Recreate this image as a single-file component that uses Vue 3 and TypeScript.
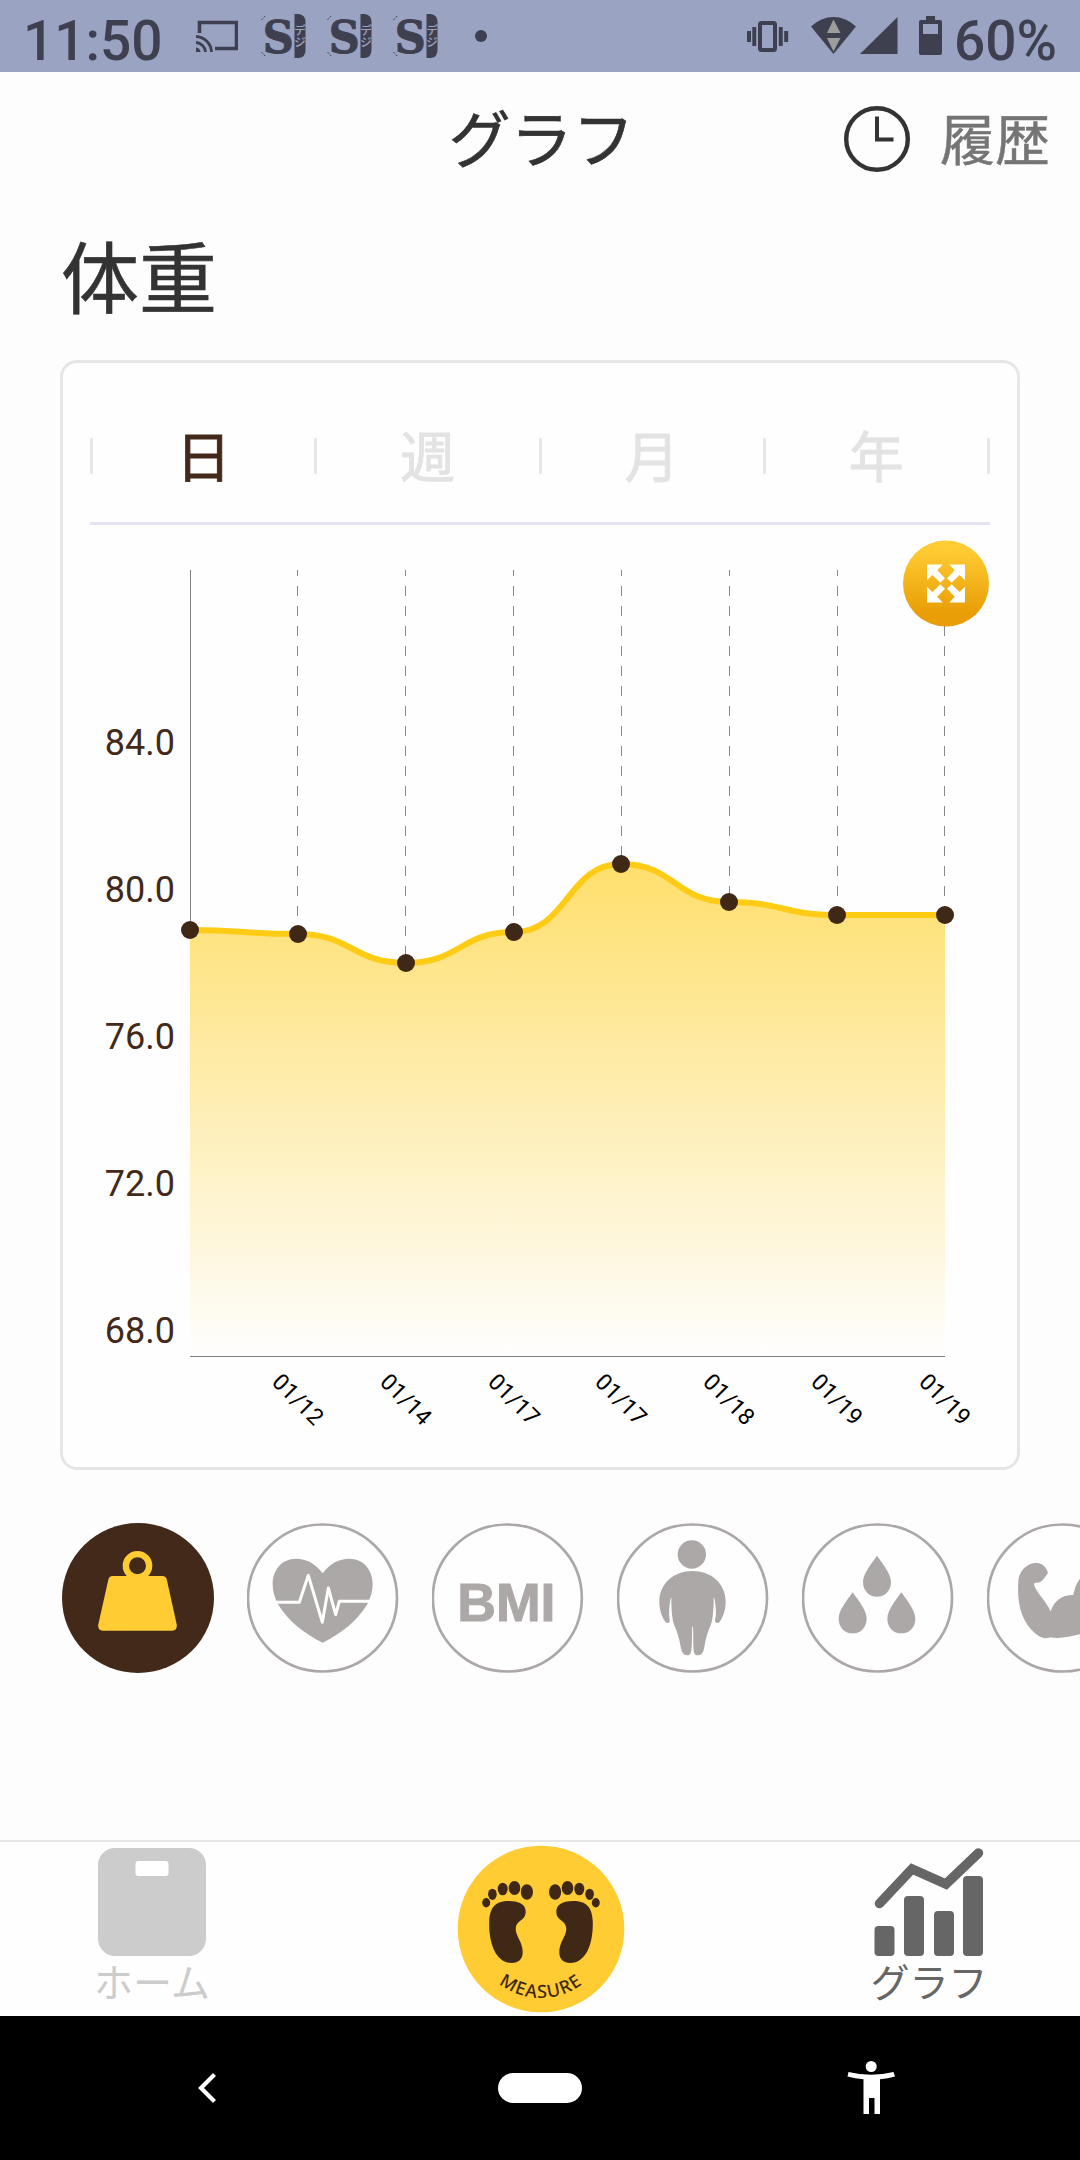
<script setup lang="ts">
interface Point {
  x: number
  y: number
  label?: string
}

const notifications = [0, 1, 2]
const tabs = ['日', '週', '月', '年']

const points: Point[] = [
  { x: 190, y: 930 },
  { x: 298, y: 934, label: '01/12' },
  { x: 406, y: 963, label: '01/14' },
  { x: 514, y: 932, label: '01/17' },
  { x: 621, y: 864, label: '01/17' },
  { x: 729, y: 902, label: '01/18' },
  { x: 837, y: 915, label: '01/19' },
  { x: 945, y: 915, label: '01/19' },
]

const yLabels = [
  { text: '84.0', y: 755 },
  { text: '80.0', y: 902 },
  { text: '76.0', y: 1049 },
  { text: '72.0', y: 1196 },
  { text: '68.0', y: 1343 },
]

// Smooth curve whose tangents are horizontal at every measurement
const linePath = points.reduce((d, p, i) => {
  if (i === 0) return `M${p.x} ${p.y}`
  const prev = points[i - 1]
  const mid = (prev.x + p.x) / 2
  return `${d} C${mid} ${prev.y} ${mid} ${p.y} ${p.x} ${p.y}`
}, '')
const areaPath = `${linePath} V1356 H190 Z`
const dated = points.filter((p) => p.label)

const arrow = '-19,-19 -3.3,-19 -8.7,-13.3 -1,-5.3 -5.6,-.7 -13.6,-8.6 -19,-3.3'
const flips = ['1,1', '-1,1', '1,-1', '-1,-1']
const drops = [[0, 0], [-73, 110], [73, 110]]
</script>

<template>
  <div class="screen">
    <header class="status">
      <span class="clock">11:50</span>
      <svg class="cast" width="42" height="34" viewBox="0 0 42 34">
        <path d="M3.5 14V3.5H40.5V29.5H19" fill="none" stroke="#3f404f" stroke-width="3.6" />
        <path d="M0 28.500A5 5 0 0 1 4.500 33H0Z" fill="#3f404f" />
        <path d="M0 23.500A10 10 0 0 1 9.500 33M0 17.500A16 16 0 0 1 15.500 33" fill="none" stroke="#3f404f" stroke-width="2.800" />
      </svg>
      <svg v-for="n in notifications" :key="n" class="note" width="45" height="44" viewBox="0 0 45 44">
        <path d="M0.500 6L5 1M0.500 38L5 43" stroke="#3f404f" stroke-width="1" stroke-dasharray="2 1.500" fill="none" />
        <text class="note-s" x="17.300" y="39" text-anchor="middle" textLength="31" lengthAdjust="spacingAndGlyphs">S</text>
        <path d="M33.500 0H38Q44.500 1 44.500 8V36Q44.500 43 38 44H33.500Z" fill="#3f404f" />
        <text class="note-d" x="39" y="10">デジ</text>
      </svg>
      <i class="dot"></i>
      <svg class="system" width="200" height="44" viewBox="745 14 200 44">
        <g fill="#3f404f">
          <rect x="760" y="23" width="15" height="27" rx="1.500" fill="none" stroke="#3f404f" stroke-width="4" />
          <path d="M747 31h4v11h-4zM752.300 27h3.900v19h-3.900zM778.800 27h3.900v19h-3.900zM784.200 31h4v11h-4z" />
          <path d="M811 26.500Q821 17 833.500 17T856 26.500L833.500 54Z" />
          <path d="M860 54L897.500 17V54Z" />
          <path d="M926 16h9v4h5q2 0 2 2v31q0 2-2 2h-19q-2 0-2-2V22q0-2 2-2h5z" />
        </g>
        <path d="M833.500 19.500L840.500 33H827ZM827 38H840.500L833.500 51.500Z" fill="#9d9d9d" />
        <path d="M923 24h15v10h-15z" fill="#9ba3c3" />
      </svg>
      <span class="percent">60%</span>
    </header>

    <div class="titlebar">
      <h1>グラフ</h1>
      <button class="history">
        <svg width="66" height="66" viewBox="0 0 66 66" fill="none" stroke="#333">
          <circle cx="33" cy="33" r="30.800" stroke-width="4.400" />
          <path d="M33 10.500V33.500H49.500" stroke-width="4" />
        </svg>
        <span>履歴</span>
      </button>
    </div>

    <h2>体重</h2>

    <section class="card">
      <nav class="tabs">
        <button v-for="(tab, i) in tabs" :key="tab" class="tab" :class="{ active: i === 0 }">
          <span>{{ tab }}</span>
        </button>
      </nav>
      <svg class="chart" width="954" height="942" viewBox="63 525 954 942">
        <defs>
          <linearGradient id="area" gradientUnits="userSpaceOnUse" x1="0" y1="570" x2="0" y2="1356">
            <stop offset="0" stop-color="#ffcc15" />
            <stop offset="1" stop-color="#ffcc15" stop-opacity="0" />
          </linearGradient>
          <linearGradient id="knob" x1="0" y1="0" x2="0" y2="1">
            <stop offset=".1" stop-color="#ffcc33" />
            <stop offset=".85" stop-color="#e99d06" />
          </linearGradient>
        </defs>
        <path d="M190 570h1V930h-1z" fill="#808080" shape-rendering="crispEdges" />
        <path
          v-for="p in dated"
          :key="p.x"
          :d="`M${p.x === 621 || p.x === 729 || p.x === 837 ? p.x + 0.5 : p.x - 0.5} 570V${p.y}`"
          stroke="#888"
          stroke-dasharray="10 10"
          stroke-dashoffset="4"
        />
        <path :d="areaPath" fill="url(#area)" />
        <path d="M190 1356H945v1H190z" fill="#808080" shape-rendering="crispEdges" />
        <path :d="linePath" fill="none" stroke="#ffcc15" stroke-width="6" />
        <circle v-for="p in points" :key="p.x" :cx="p.x" :cy="p.y" r="9" fill="#402817" />
        <text v-for="l in yLabels" :key="l.text" class="y-label" x="175" :y="l.y" text-anchor="end">{{ l.text }}</text>
        <text
          v-for="p in dated"
          :key="p.x"
          class="x-label"
          text-anchor="middle"
          :transform="`translate(${p.x - 5.5} ${1405}) rotate(45)`"
        >{{ p.label }}</text>
        <g transform="translate(946 583.500)">
          <circle r="43" fill="url(#knob)" />
          <polygon v-for="f in flips" :key="f" :points="arrow" :transform="`scale(${f})`" fill="#fff" />
        </g>
      </svg>
    </section>

    <div class="metrics">
      <svg class="metric" viewBox="36 39 456 450" preserveAspectRatio="none">
        <ellipse cx="264" cy="264" rx="228" ry="225" fill="#42291a" />
        <circle cx="262.500" cy="167.500" r="35" fill="none" stroke="#ffcc33" stroke-width="19" />
        <path d="M188 198H337Q348 198 350.500 209L380.500 345Q382 362 366 362H159Q143 362 144.500 345L175 209Q177 198 188 198Z" fill="#ffcc33" />
      </svg>
      <svg class="metric" viewBox="591 39 456 450">
        <ellipse cx="817.500" cy="264" rx="223.500" ry="220.500" class="ring" />
        <path d="M818 190C797 160 768 146 738 146C695 146 668 180 668 222C668 244 674 263 684 283C714 333 764 372 818 398C872 372 922 333 952 283C962 263 968 244 968 222C968 180 941 146 898 146C868 146 839 160 818 190Z" fill="#aca8a7" />
        <path d="M676 277H748L775 196L817 337L835 234L857 314L868 274H962" fill="none" stroke="#fefefe" stroke-width="9" stroke-linejoin="round" />
      </svg>
      <svg class="metric" viewBox="1146 39 456 450">
        <ellipse cx="1372" cy="264" rx="223.500" ry="220.500" class="ring" />
        <text class="bmi" x="1369" y="332" text-anchor="middle">BMI</text>
      </svg>
      <svg class="metric" viewBox="171 39 456 450">
        <ellipse cx="397.500" cy="264" rx="223.500" ry="220.500" class="ring" />
        <circle cx="395.500" cy="133.500" r="42.500" fill="#aca8a7" />
        <path d="M397.500 183C453 183 497 220 497 275C497 299 489 321 481 332C476 342 464 340 465 331C470 312 468 290 463 264H461C461 300 459 330 451 349C445 362 443 368 437 390C432 412 433 436 413 436C397 435 401 415 399 350H396.500C395 415 398 435 382 436C363 436 363 412 358 390C352 368 350 362 344 349C336 330 334 300 334 264H332C327 290 326 312 329 331C331 340 319 342 314 332C306 321 298 299 298 275C298 220 342 183 397.500 183Z" fill="#aca8a7" />
      </svg>
      <svg class="metric" viewBox="726 39 456 450">
        <ellipse cx="952.500" cy="264" rx="223.500" ry="220.500" class="ring" />
        <path v-for="d in drops" :key="d[0]" :transform="`translate(${d[0]} ${d[1]})`" d="M951 137C965 158 993 190 993 216C993 243 974 260 951 260C928 260 909 243 909 216C909 190 937 158 951 137Z" fill="#aca8a7" />
      </svg>
      <svg class="metric" viewBox="1281 39 456 450">
        <ellipse cx="1507.500" cy="264" rx="223.500" ry="220.500" class="ring" />
        <path d="M1375 215C1376 190 1390 172 1410 163C1432 154 1452 160 1462 183Q1466 190 1459 196C1449 211 1440 221 1427 218Q1420 218 1423 227C1435 255 1460 275 1472 304C1483 272 1505 255 1540 255C1545 230 1552 215 1565 200C1620 190 1650 260 1640 330C1620 365 1590 368 1560 373C1530 380 1500 387 1471 382C1452 388 1440 383 1425 370C1385 335 1370 280 1375 215Z" fill="#aca8a7" />
      </svg>
    </div>

    <footer class="tabbar">
      <div class="item home">
        <svg width="108" height="108" viewBox="0 0 108 108">
          <rect width="108" height="108" rx="17" fill="#ccc" />
          <rect x="37.500" y="13" width="33" height="15" rx="3" fill="#fff" />
        </svg>
        <span>ホーム</span>
      </div>
      <svg class="measure" width="168" height="168" viewBox="456.300 1845 168 168">
        <defs><path id="arc" d="M471.300 1929A69 69 0 0 0 609.300 1929" /></defs>
        <circle cx="540.300" cy="1929" r="83.300" fill="#ffcc33" />
        <g v-for="s in [1, -1]" :key="s" :transform="`translate(540.3 0) scale(${s} 1) translate(-540.3 0)`" fill="#402817">
          <ellipse cx="485.500" cy="1902.700" rx="4" ry="4.700" />
          <ellipse cx="491.700" cy="1894.300" rx="4.300" ry="5.600" />
          <ellipse cx="502" cy="1889" rx="5" ry="6.300" />
          <ellipse cx="513.800" cy="1888" rx="5.800" ry="7" />
          <ellipse cx="526.200" cy="1892" rx="6.100" ry="7.700" />
          <path d="M508 1901C520 1901 525 1905 525 1912C525 1921 515 1920 515 1929C515 1936 522 1942 522 1952C522 1959 518 1963 511 1963C496 1963 488 1945 488.500 1922C489 1907 495 1901 508 1901Z" />
        </g>
        <text class="measure-text" text-anchor="middle"><textPath href="#arc" startOffset="50%">MEASURE</textPath></text>
      </svg>
      <div class="item graph">
        <svg width="110" height="108" viewBox="873 1848 110 108">
          <g fill="#666">
            <rect x="873.500" y="1926" width="20" height="30" rx="4" />
            <rect x="903" y="1896" width="20" height="60" rx="4" />
            <rect x="933" y="1911" width="20" height="45" rx="4" />
            <rect x="962" y="1876" width="20" height="80" rx="4" />
          </g>
          <path d="M878.500 1903.500L911 1869L945 1884L977.500 1853" fill="none" stroke="#666" stroke-width="9.500" stroke-linecap="round" />
        </svg>
        <span>グラフ</span>
      </div>
    </footer>

    <nav class="system-nav">
      <svg width="24" height="34" viewBox="0 0 24 34"><path d="M18.500 3.500L5 17L18.500 30.500" fill="none" stroke="#fff" stroke-width="4.200" /></svg>
      <i class="pill"></i>
      <svg width="48" height="56" viewBox="847 2061 48 56" fill="#fff">
        <circle cx="871.200" cy="2067.500" r="5.500" />
        <path d="M848.500 2073Q871 2078.500 893.500 2073L895 2077.500Q888 2079.500 880 2080.300V2115H874.500V2099H869V2115H863.500V2080.300Q855 2079.500 847.500 2077.500Z" />
      </svg>
    </nav>
  </div>
</template>

<style>
body {
  margin: 0;
  background: #fdfdfd;
}
</style>

<style scoped>
.screen {
  width: 1080px;
  height: 2160px;
  display: flex;
  flex-direction: column;
  overflow: hidden;
  background: #fdfdfd;
  color: #333;
  font-family: "Noto Sans CJK JP", sans-serif;
}
svg {
  display: block;
  flex: none;
}
h1, h2 {
  margin: 0;
  font-weight: 400;
  -webkit-text-stroke: .6px currentColor;
}
button {
  border: 0;
  padding: 0;
  background: none;
  font: inherit;
}
.status {
  height: 72px;
  flex: none;
  display: flex;
  align-items: center;
  box-sizing: border-box;
  padding-left: 23px;
  background: #9ba3c3;
  color: #3f404f;
  font: 500 55px/72px Roboto, sans-serif;
}
.clock {
  width: 173px;
  padding-top: 9px;
}
.cast {
  margin-right: 23px;
}
.note {
  margin-right: 21px;
  overflow: visible;
}
.note-s {
  font: 700 45px "DejaVu Serif", serif;
  fill: #3f404f;
  stroke: #3f404f;
  stroke-width: 1;
}
.note-d {
  font: 500 12px "Noto Sans CJK JP", sans-serif;
  writing-mode: vertical-rl;
  fill: #9ba3c3;
}
.dot {
  width: 12px;
  height: 12px;
  margin-left: 16px;
  border-radius: 50%;
  background: #3f404f;
}
.system {
  margin-left: auto;
}
.percent {
  width: 126px;
  padding: 9px 0 0 9px;
  box-sizing: content-box;
}
.titlebar {
  height: 134px;
  flex: none;
  display: grid;
  grid-template-columns: 1fr auto 1fr;
  align-items: center;
}
h1 {
  grid-column: 2;
  padding-left: 3px;
  font-size: 62px;
  line-height: 128px;
  height: 134px;
}
.history {
  justify-self: end;
  display: flex;
  align-items: center;
  gap: 30px;
  margin-right: 30px;
  color: #757575;
  font-size: 55px;
  line-height: 128px;
  -webkit-text-stroke: .5px currentColor;
}
.history span {
  height: 134px;
}
h2 {
  height: 154px;
  padding-left: 61px;
  font-size: 78px;
  line-height: 136px;
}
.card {
  width: 960px;
  height: 1110px;
  flex: none;
  box-sizing: border-box;
  margin-left: 60px;
  border: 3px solid #e6e6e6;
  border-radius: 17px;
  background: #fefefe;
}
.tabs {
  height: 162px;
  box-sizing: border-box;
  margin: 0 27px;
  padding-top: 75px;
  display: flex;
  align-items: flex-start;
  border-bottom: 3px solid #e3e4ef;
}
.tab {
  flex: 1;
  height: 36px;
  display: flex;
  align-items: flex-start;
  justify-content: center;
  border-left: 3px solid #e6e6e6;
  color: #e3e3e3;
  font-size: 55px;
  line-height: 31px;
  -webkit-text-stroke: .9px currentColor;
}
.tab:last-child {
  border-right: 3px solid #e6e6e6;
}
.tab.active {
  color: #42291a;
}
.y-label {
  font: 400 36px Roboto, sans-serif;
  fill: #42291a;
}
.x-label {
  font: 400 23px Roboto, sans-serif;
  fill: #000;
}
.metrics {
  flex: none;
  display: flex;
  gap: 33px;
  margin: 53px 0 0 62px;
  overflow: hidden;
}
.metric {
  width: 152px;
  height: 150px;
}
.ring {
  fill: #fefefe;
  stroke: #aca8a7;
  stroke-width: 8;
}
.bmi {
  font: 700 161px "Liberation Sans", sans-serif;
  fill: #aca8a7;
  stroke: #aca8a7;
  stroke-width: 3;
}
.tabbar {
  height: 176px;
  flex: none;
  box-sizing: border-box;
  margin-top: auto;
  padding: 3px 93px 0 94px;
  display: flex;
  justify-content: space-between;
  border-top: 2px solid #e6e6e6;
  background: #fefefe;
}
.item {
  width: 116px;
  padding-top: 3px;
  display: flex;
  flex-direction: column;
  align-items: center;
  white-space: nowrap;
  font-size: 39px;
  line-height: 48px;
}
.home {
  color: #ccc;
}
.graph {
  color: #666;
}
.measure-text {
  font: 500 18px "Noto Sans", sans-serif;
  fill: #402817;
  letter-spacing: 1.1px;
}
.system-nav {
  height: 144px;
  flex: none;
  box-sizing: border-box;
  padding: 0 185px 0 196px;
  display: grid;
  grid-template-columns: 24px 1fr 48px;
  align-items: center;
  background: #000;
}
.pill {
  width: 84px;
  height: 30px;
  margin-left: 278px;
  border-radius: 15px;
  background: #fff;
}
</style>
